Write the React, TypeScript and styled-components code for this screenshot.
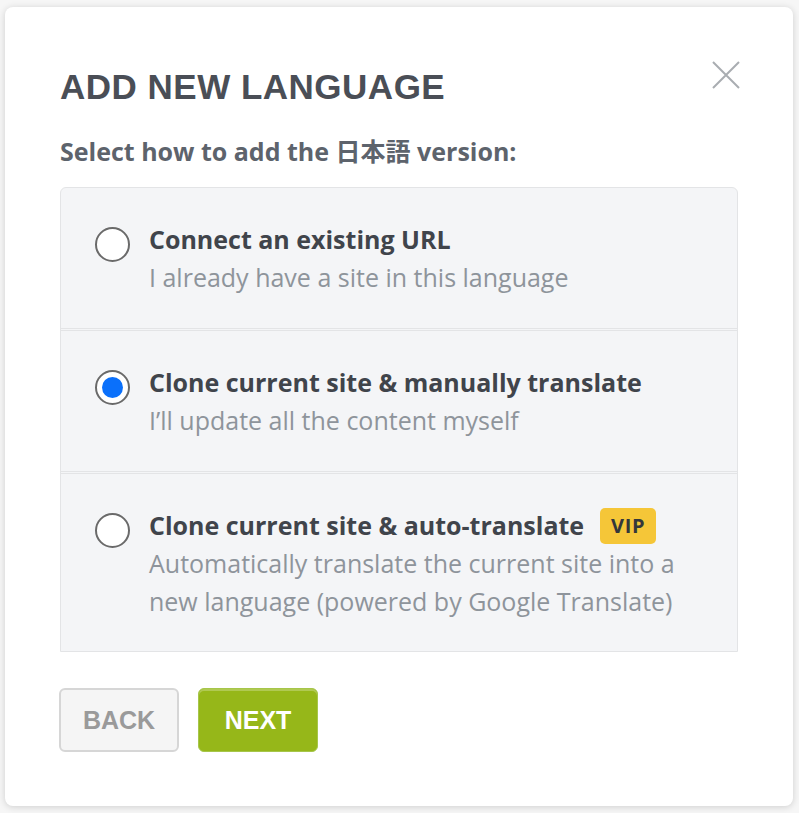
import React, { useState } from 'react';
import styled, { createGlobalStyle } from 'styled-components';

const GlobalStyle = createGlobalStyle`
  html, body {
    margin: 0;
    padding: 0;
    background: #f6f6f6;
  }
  * {
    box-sizing: border-box;
  }
`;

const Page = styled.div`
  padding: 7px 6px 7px 5px;
`;

const Card = styled.div`
  position: relative;
  width: 788px;
  height: 799px;
  background: #ffffff;
  border-radius: 8px;
  box-shadow: 0 1px 7px rgba(0, 0, 0, 0.16);
  padding: 60px 55px 0 55px;
`;

const Title = styled.h1`
  margin: 0;
  font-family: "Liberation Sans", Arial, sans-serif;
  font-weight: 700;
  font-size: 35px;
  line-height: 40px;
  letter-spacing: 0.5px;
  color: #4a4e56;
`;

const CloseButton = styled.button`
  position: absolute;
  top: 54px;
  right: 53px;
  width: 28px;
  height: 28px;
  padding: 0;
  border: none;
  background: none;
  cursor: pointer;
  svg {
    display: block;
  }
`;

const Subtitle = styled.p`
  margin: 29px 0 21px;
  font-family: "Open Sans", "Noto Sans CJK JP", sans-serif;
  font-weight: 700;
  font-size: 25px;
  line-height: 30px;
  color: #5d636c;
`;

const OptionGroup = styled.div`
  border: 1px solid #e3e4e6;
  border-radius: 6px 6px 0 0;
  background: #f4f5f7;
  overflow: hidden;
`;

const OptionRow = styled.label`
  display: flex;
  align-items: flex-start;
  gap: 19px;
  padding: 32px 20px 32px 34px;
  cursor: pointer;
  & + & {
    border-top: 3px double #e3e4e6;
  }
  &:last-child {
    padding-bottom: 31px;
  }
`;

const Radio = styled.span<{ checked: boolean }>`
  flex: none;
  width: 35px;
  height: 35px;
  margin-top: 7px;
  border-radius: 50%;
  border: 2px solid #6a6a6a;
  background: #ffffff;
  display: flex;
  align-items: center;
  justify-content: center;
  &::after {
    content: '';
    width: 21px;
    height: 21px;
    border-radius: 50%;
    background: ${p => (p.checked ? '#0a70fb' : 'transparent')};
  }
`;

const OptionText = styled.div`
  font-family: "Open Sans", sans-serif;
  font-size: 25px;
  line-height: 38px;
`;

const OptionTitle = styled.div`
  font-weight: 700;
  color: #40444b;
`;

const OptionDesc = styled.div`
  font-weight: 400;
  color: #8e949b;
`;

const Badge = styled.span`
  display: inline-block;
  vertical-align: middle;
  margin-left: 16px;
  margin-top: -4px;
  height: 36px;
  padding: 0 11px;
  border-radius: 5px;
  background: #f5c638;
  color: #34373b;
  font-size: 20px;
  font-weight: 700;
  line-height: 36px;
  letter-spacing: 0.6px;
`;

const Actions = styled.div`
  display: flex;
  gap: 19px;
  margin-top: 36px;
  margin-left: -1px;
`;

const Button = styled.button<{ primary?: boolean }>`
  width: 120px;
  height: 64px;
  border-radius: 6px;
  font-family: "Liberation Sans", Arial, sans-serif;
  font-weight: 700;
  font-size: 25px;
  cursor: pointer;
  border: ${p => (p.primary ? '1px solid #a6c64a' : '2px solid #d6d6d6')};
  background: ${p => (p.primary ? '#96b719' : '#f5f5f5')};
  color: ${p => (p.primary ? '#ffffff' : '#9a9a9a')};
  box-shadow: ${p => (p.primary ? 'inset 0 2px 0 rgba(255,255,255,0.25)' : 'none')};
`;

type Option = {
  id: string;
  title: string;
  desc: string[];
  vip?: boolean;
};

const options: Option[] = [
  { id: 'url', title: 'Connect an existing URL', desc: ['I already have a site in this language'] },
  { id: 'manual', title: 'Clone current site & manually translate', desc: ['I’ll update all the content myself'] },
  {
    id: 'auto',
    title: 'Clone current site & auto-translate',
    desc: ['Automatically translate the current site into a', 'new language (powered by Google Translate)'],
    vip: true,
  },
];

const App: React.FC = () => {
  const [selected, setSelected] = useState('manual');

  return (
    <Page>
      <GlobalStyle />
      <Card>
        <Title>ADD NEW LANGUAGE</Title>
        <CloseButton aria-label="Close">
          <svg width="28" height="28" viewBox="0 0 28 28">
            <path d="M1 1 L27 27 M27 1 L1 27" stroke="#a9adb1" strokeWidth="2" fill="none" />
          </svg>
        </CloseButton>
        <Subtitle>Select how to add the 日本語 version:</Subtitle>
        <OptionGroup>
          {options.map(o => (
            <OptionRow key={o.id} onClick={() => setSelected(o.id)}>
              <Radio checked={selected === o.id} />
              <OptionText>
                <OptionTitle>
                  {o.title}
                  {o.vip && <Badge>VIP</Badge>}
                </OptionTitle>
                {o.desc.map(line => (
                  <OptionDesc key={line}>{line}</OptionDesc>
                ))}
              </OptionText>
            </OptionRow>
          ))}
        </OptionGroup>
        <Actions>
          <Button>BACK</Button>
          <Button primary>NEXT</Button>
        </Actions>
      </Card>
    </Page>
  );
};

export default App;
